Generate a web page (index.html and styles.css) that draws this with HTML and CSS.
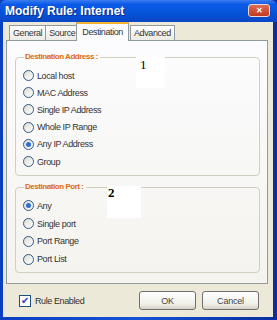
FILE: index.html
```html
<!DOCTYPE html>
<html lang="en">

<head>
    <meta charset="UTF-8">
    <title>Modify Rule: Internet</title>
    <link rel="stylesheet" href="styles.css">
</head>

<body>
    <div class="window">
        <div class="titlebar">
            <span class="title">Modify Rule: Internet</span>
            <span class="close">&#x2715;</span>
        </div>
        <div class="client">
            <div class="tabs">
                <div class="tab">General</div>
                <div class="tab">Source</div>
                <div class="tab active">Destination</div>
                <div class="tab">Advanced</div>
            </div>
            <div class="panel">
                <fieldset class="group group-address">
                    <legend>Destination Address :</legend>
                    <label class="radio"><span class="dot"></span>Local host</label>
                    <label class="radio"><span class="dot"></span>MAC Address</label>
                    <label class="radio"><span class="dot"></span>Single IP Address</label>
                    <label class="radio"><span class="dot"></span>Whole IP Range</label>
                    <label class="radio"><span class="dot checked"></span>Any IP Address</label>
                    <label class="radio"><span class="dot"></span>Group</label>
                    <div class="note note-1">1</div>
                </fieldset>
                <fieldset class="group group-port">
                    <legend>Destination Port :</legend>
                    <label class="radio"><span class="dot checked"></span>Any</label>
                    <label class="radio"><span class="dot"></span>Single port</label>
                    <label class="radio"><span class="dot"></span>Port Range</label>
                    <label class="radio"><span class="dot"></span>Port List</label>
                    <div class="note note-2">2</div>
                </fieldset>
            </div>
            <div class="footer">
                <label class="check"><span class="box">&#x2714;</span>Rule Enabled</label>
                <div class="buttons">
                    <button class="btn">OK</button>
                    <button class="btn">Cancel</button>
                </div>
            </div>
        </div>
    </div>
</body>

</html>
```

FILE: styles.css
```css
body {
    margin: 0;
    padding: 0;
    font-family: "Liberation Sans", Arial, sans-serif;
    font-size: 9px;
    letter-spacing: -0.4px;
    color: #000;
    background: #fff;
}

.window {
    width: 277px;
    height: 320px;
    box-sizing: border-box;
    background: linear-gradient(to right, #0a3fc0, #1352d6 50%, #0a2f9c);
    padding: 0 4px 3px 3px;
    display: flex;
    flex-direction: column;
}

.titlebar {
    height: 22px;
    margin: 0 -4px 0 -3px;
    padding: 0 7px 0 5px;
    display: flex;
    align-items: center;
    justify-content: space-between;
    background: linear-gradient(to bottom, #3b7cf0 0%, #0a5ae8 20%, #0553d8 60%, #0a47c5 100%);
    border-radius: 6px 6px 0 0;
}

.title {
    color: #fff;
    font-weight: bold;
    font-size: 12px;
    letter-spacing: 0;
    text-shadow: 1px 1px 0 #0b2c8a;
}

.close {
    width: 20px;
    height: 11px;
    border: 1px solid #f0d8d0;
    border-radius: 3px;
    background: linear-gradient(to bottom, #dc6c55, #c2391e);
    color: #fff;
    font-size: 8px;
    font-weight: bold;
    letter-spacing: 0;
    display: flex;
    align-items: center;
    justify-content: center;
    margin-top: -1px;
}

.client {
    flex: 1;
    background: #ece9d8;
    padding: 3px 5px 0 3px;
    display: flex;
    flex-direction: column;
}

.tabs {
    display: flex;
    align-items: flex-end;
    height: 15px;
    padding-left: 3px;
    position: relative;
    z-index: 1;
}

.tab {
    height: 14px;
    padding: 0 3px;
    line-height: 14px;
    color: #333;
    background: linear-gradient(to bottom, #fff, #ecebe5);
    border: 1px solid #919b9c;
    border-bottom: none;
    margin-right: -1px;
}

.tab.active {
    height: 17px;
    line-height: 17px;
    background: #fcfcfe;
    border-top: 2px solid #f5b031;
    margin: 0 1px 0 -2px;
    padding: 0 5px;
    position: relative;
    top: 1px;
}

.panel {
    height: 244px;
    border: 1px solid #919b9c;
    background: linear-gradient(to bottom, #fcfcfe, #f4f3ee);
    padding: 11px 7px 0 8px;
    box-sizing: border-box;
}

.group {
    position: relative;
    margin: 0 0 6px 0;
    padding: 5px 0 5px 7px;
    border: 1px solid #d0d0bf;
    border-radius: 4px;
}

.group legend {
    color: #e06a0c;
    font-weight: bold;
    font-size: 8px;
    line-height: 10px;
    letter-spacing: -0.45px;
    padding: 0 2px 0 1px;
    margin-left: 1px;
}

.radio {
    display: flex;
    align-items: center;
    height: 17.2px;
    color: #333;
}

.group-port .radio {
    height: 17.7px;
}

.group-port {
    padding-bottom: 4px;
}

.dot {
    width: 9px;
    height: 9px;
    border: 1px solid #2f5a8a;
    border-radius: 50%;
    background: linear-gradient(135deg, #dcdcd4, #fff);
    margin-right: 3px;
    position: relative;
}

.dot.checked::after {
    content: "";
    position: absolute;
    left: 2px;
    top: 2px;
    width: 5px;
    height: 5px;
    border-radius: 50%;
    background: #2d6fd0;
}

.note {
    position: absolute;
    background: #fff;
    font-family: "Liberation Serif", serif;
    font-size: 13px;
    letter-spacing: 0;
    line-height: 14px;
    color: #000;
}

.note-1 {
    left: 120px;
    top: -6px;
    padding: 2px 18px 16px 4px;
}

.note-2 {
    left: 91px;
    top: -6px;
    font-weight: bold;
    padding: 0 26px 18px 1px;
}

.footer {
    flex: 1;
    display: flex;
    align-items: center;
    justify-content: space-between;
    padding: 0 9px 0 13px;
}

.check {
    display: flex;
    align-items: center;
    color: #333;
}

.box {
    width: 10px;
    height: 10px;
    border: 1px solid #1c5180;
    background: #fff;
    color: #2142c0;
    font-size: 10px;
    line-height: 10px;
    letter-spacing: 0;
    text-align: center;
    margin-right: 4px;
}

.buttons {
    display: flex;
    gap: 6px;
}

.btn {
    width: 57px;
    height: 19px;
    font-family: "Liberation Sans", Arial, sans-serif;
    font-size: 9px;
    letter-spacing: -0.2px;
    color: #444;
    border: 1px solid #707070;
    border-radius: 3px;
    background: linear-gradient(to bottom, #fff, #f0f0ea 70%, #d6d0c5);
    padding: 0;
}
```
